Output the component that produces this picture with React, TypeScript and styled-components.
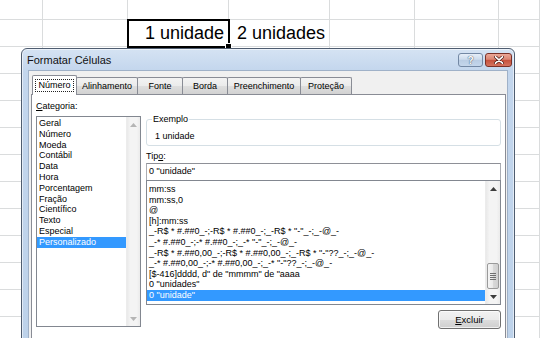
import React from "react";
import styled, { createGlobalStyle, css } from "styled-components";

const GlobalStyle = createGlobalStyle`
  html, body { margin: 0; padding: 0; }
  body {
    width: 540px; height: 338px; overflow: hidden; background: #fff;
    font-family: "Liberation Sans", Arial, sans-serif;
  }
`;

const Page = styled.div`
  position: relative;
  width: 540px;
  height: 338px;
  overflow: hidden;
`;

/* ---------- spreadsheet ---------- */
const Sheet = styled.div`
  display: flex;
  flex-direction: column;
`;
const SheetRow = styled.div<{ $h: number }>`
  display: flex;
  flex: none;
  height: ${(p) => p.$h}px;
`;
const SheetCell = styled.div<{ $w: number; $selected?: boolean }>`
  position: relative;
  box-sizing: border-box;
  flex: none;
  width: ${(p) => p.$w}px;
  height: 100%;
  border-right: 1px solid #dadcdd;
  border-bottom: 1px solid #dadcdd;
  display: flex;
  align-items: flex-end;
  justify-content: flex-end;
  padding: 0 4px 3px 0;
  font-size: 18px;
  line-height: 20px;
  color: #000;
  white-space: nowrap;
  ${(p) =>
    p.$selected &&
    css`
      outline: 2px solid #000;
      outline-offset: -1px;
      z-index: 1;
    `}
`;
const FillHandle = styled.span`
  position: absolute;
  right: -4px;
  bottom: -4px;
  width: 5px;
  height: 5px;
  background: #000;
  border: 1px solid #fff;
`;

/* ---------- dialog frame ---------- */
const Dialog = styled.div`
  position: absolute;
  left: 21px;
  top: 48px;
  width: 494px;
  height: 300px;
  box-sizing: border-box;
  border: 1px solid #4f5d70;
  border-radius: 6px 6px 0 0;
  background: linear-gradient(#d5e3f3, #c3d6ed 22px, #bdd2ea);
  box-shadow: inset 0 0 0 1px rgba(255, 255, 255, 0.55);
  display: flex;
  flex-direction: column;
  font-family: "Liberation Sans", Arial, sans-serif;
  font-size: 9px;
  color: #000;
  z-index: 5;
`;
const TitleBar = styled.div`
  height: 21px;
  flex: none;
  display: flex;
  align-items: flex-start;
  justify-content: space-between;
  padding: 0 2px 0 5px;
`;
const Title = styled.div`
  font-size: 11px;
  line-height: 22px;
  color: #111;
`;
const CaptionButtons = styled.div`
  display: flex;
  gap: 2px;
  margin-top: 4px;
`;
const CaptionButton = styled.div<{ $kind: "help" | "close" }>`
  box-sizing: border-box;
  height: 14px;
  width: ${(p) => (p.$kind === "close" ? 27 : 25)}px;
  border-radius: 3px;
  display: flex;
  align-items: center;
  justify-content: center;
  font-size: 10px;
  font-weight: bold;
  color: #fff;
  ${(p) =>
    p.$kind === "close"
      ? css`
          border: 1px solid #7a3128;
          background: linear-gradient(#eba898, #d98472 45%, #c6503b 50%, #d4735f);
        `
      : css`
          border: 1px solid #7388a4;
          background: linear-gradient(#e6eef8, #ccdbec 45%, #b9cce3 50%, #c4d6eb);
          text-shadow: 0 0 1px #3e4f66, 0 0 1px #3e4f66;
        `}
`;

const Client = styled.div`
  flex: 1;
  margin: 0 6px;
  border: 1px solid #9fb1c8;
  border-bottom: none;
  background: #f0f0f0;
  padding: 4px 1px 0 2px;
  display: flex;
  flex-direction: column;
`;

/* ---------- tabs ---------- */
const TabRow = styled.div`
  display: flex;
  align-items: flex-end;
  height: 19px;
  padding-left: 1px;
  flex: none;
`;
const Tab = styled.div<{ $w: number; $active?: boolean }>`
  box-sizing: border-box;
  width: ${(p) => p.$w}px;
  margin-right: -1px;
  border: 1px solid #898c95;
  border-bottom: none;
  border-radius: 2px 2px 0 0;
  display: flex;
  align-items: center;
  justify-content: center;
  white-space: nowrap;
  ${(p) =>
    p.$active
      ? css`
          position: relative;
          z-index: 2;
          height: 20px;
          margin-bottom: -1px;
          background: #fff;
          padding-bottom: 1px;
        `
      : css`
          height: 17px;
          background: linear-gradient(#f3f3f3, #ebebeb 50%, #dedede 50%, #d2d2d2);
        `}
`;
const FocusText = styled.span`
  border: 1px dotted #222;
  padding: 0 2px;
  line-height: 11px;
`;

const Panel = styled.div`
  flex: 1;
  background: #fff;
  border: 1px solid #898c95;
  border-bottom: none;
  padding: 6px 4px 0 4px;
  display: flex;
  gap: 5px;
`;

const LeftColumn = styled.div`
  width: 105px;
  flex: none;
  display: flex;
  flex-direction: column;
`;
const RightColumn = styled.div`
  flex: 1;
  display: flex;
  flex-direction: column;
`;

const FieldLabel = styled.div<{ $mt?: number; $mb?: number }>`
  line-height: 11px;
  margin-top: ${(p) => p.$mt ?? 0}px;
  margin-bottom: ${(p) => p.$mb ?? 0}px;
  white-space: nowrap;
`;

/* ---------- list boxes ---------- */
const ListBox = styled.div<{ $h: number }>`
  box-sizing: border-box;
  height: ${(p) => p.$h}px;
  flex: none;
  border: 1px solid #828790;
  background: #fff;
  display: flex;
`;
const ListItems = styled.div<{ $pt: number }>`
  flex: 1;
  min-width: 0;
  padding-top: ${(p) => p.$pt}px;
  overflow: hidden;
`;
const ListItem = styled.div<{ $lh: number; $selected?: boolean }>`
  line-height: ${(p) => p.$lh}px;
  height: ${(p) => p.$lh}px;
  padding-left: 2px;
  white-space: nowrap;
  ${(p) =>
    p.$selected &&
    css`
      background: #3399ff;
      color: #fff;
    `}
`;

const ScrollBar = styled.div<{ $w: number }>`
  box-sizing: border-box;
  width: ${(p) => p.$w}px;
  flex: none;
  display: flex;
  flex-direction: column;
  border-left: 1px solid #ececec;
  background: linear-gradient(90deg, #e9e9e9, #f4f4f4 25%, #f4f4f4 75%, #ebebeb);
`;
const ArrowBox = styled.div`
  height: 15px;
  flex: none;
  display: flex;
  align-items: center;
  justify-content: center;
`;
const TrackSpace = styled.div`
  flex: 1;
  display: flex;
  flex-direction: column;
  justify-content: flex-end;
`;
const Thumb = styled.div`
  height: 24px;
  margin: 0 1px;
  border: 1px solid #9a9a9a;
  border-radius: 2px;
  background: linear-gradient(90deg, #f5f5f5, #e9e9e9 50%, #d9d9d9 50%, #d0d0d0);
  display: flex;
  align-items: center;
  justify-content: center;
`;

/* ---------- right column parts ---------- */
const GroupBox = styled.fieldset`
  margin: 13px 0 0 0;
  padding: 0 0 0 8px;
  border: 1px solid #d5dfe5;
  border-radius: 3px;
  min-width: 0;
`;
const Legend = styled.legend`
  padding: 0 1px;
  margin-left: -3px;
  line-height: 11px;
`;
const Sample = styled.div`
  line-height: 11px;
  margin: 6px 0 3px 0;
`;
const TextBox = styled.div`
  box-sizing: border-box;
  height: 17px;
  flex: none;
  margin-top: 1px;
  border: 1px solid #abadb3;
  border-top-color: #8e9097;
  border-bottom: none;
  padding-left: 2px;
  line-height: 15px;
  background: #fff;
  white-space: nowrap;
`;
const ButtonRow = styled.div`
  display: flex;
  justify-content: flex-end;
  margin-top: 5px;
`;
const PushButton = styled.div`
  box-sizing: border-box;
  width: 63px;
  height: 19px;
  border: 1px solid #707070;
  border-radius: 3px;
  background: linear-gradient(#f2f2f2, #ebebeb 50%, #dddddd 50%, #cfcfcf);
  box-shadow: inset 0 0 0 1px rgba(255, 255, 255, 0.7);
  display: flex;
  align-items: center;
  justify-content: center;
  font-size: 9.5px;
`;

/* ---------- icons ---------- */
const Arrow = ({ up, color }: { up?: boolean; color: string }) => (
  <svg width="7" height="4" viewBox="0 0 7 4">
    <polygon points={up ? "0,4 7,4 3.5,0" : "0,0 7,0 3.5,4"} fill={color} />
  </svg>
);
const Grip = () => (
  <svg width="6" height="7" viewBox="0 0 6 7">
    {[0, 2, 4, 6].map((y) => (
      <line key={y} x1="0" y1={y + 0.5} x2="6" y2={y + 0.5} stroke="#6f6f6f" strokeWidth="1" />
    ))}
  </svg>
);
const CloseGlyph = () => (
  <svg width="10" height="8" viewBox="0 0 10 8">
    <path d="M1.5 0.8 L8.5 7.2 M8.5 0.8 L1.5 7.2" stroke="#4d1a14" strokeWidth="3" strokeLinecap="round" />
    <path d="M1.5 0.8 L8.5 7.2 M8.5 0.8 L1.5 7.2" stroke="#fff" strokeWidth="1.6" strokeLinecap="round" />
  </svg>
);

/* ---------- data ---------- */
const COLS = [43, 85, 101, 101, 85, 84, 41];
const ROWS = [20, 27, 27, 27, 27, 27, 27, 27, 27, 27, 27, 27, 27];

const TABS = [
  { label: "Número", w: 45 },
  { label: "Alinhamento", w: 62 },
  { label: "Fonte", w: 46 },
  { label: "Borda", w: 46 },
  { label: "Preenchimento", w: 74 },
  { label: "Proteção", w: 52 },
];

const CATEGORIES = [
  "Geral",
  "Número",
  "Moeda",
  "Contábil",
  "Data",
  "Hora",
  "Porcentagem",
  "Fração",
  "Científico",
  "Texto",
  "Especial",
  "Personalizado",
];

const FORMATS = [
  "mm:ss",
  "mm:ss,0",
  "@",
  "[h]:mm:ss",
  '_-R$ * #.##0_-;-R$ * #.##0_-;_-R$ * "-"_-;_-@_-',
  '_-* #.##0_-;-* #.##0_-;_-* "-"_-;_-@_-',
  '_-R$ * #.##0,00_-;-R$ * #.##0,00_-;_-R$ * "-"??_-;_-@_-',
  '_-* #.##0,00_-;-* #.##0,00_-;_-* "-"??_-;_-@_-',
  '[$-416]dddd, d" de "mmmm" de "aaaa',
  '0 "unidades"',
  '0 "unidade"',
];

export default function App() {
  return (
    <Page>
      <GlobalStyle />
      <Sheet>
        {ROWS.map((h, r) => (
          <SheetRow key={r} $h={h}>
            {COLS.map((w, c) => {
              const selected = r === 1 && c === 2;
              let text = "";
              if (r === 1 && c === 2) text = "1 unidade";
              if (r === 1 && c === 3) text = "2 unidades";
              return (
                <SheetCell key={c} $w={w} $selected={selected}>
                  {text}
                  {selected && <FillHandle />}
                </SheetCell>
              );
            })}
          </SheetRow>
        ))}
      </Sheet>

      <Dialog>
        <TitleBar>
          <Title>Formatar Células</Title>
          <CaptionButtons>
            <CaptionButton $kind="help">?</CaptionButton>
            <CaptionButton $kind="close">
              <CloseGlyph />
            </CaptionButton>
          </CaptionButtons>
        </TitleBar>
        <Client>
          <TabRow>
            {TABS.map((t, i) => (
              <Tab key={t.label} $w={t.w} $active={i === 0}>
                {i === 0 ? <FocusText>{t.label}</FocusText> : t.label}
              </Tab>
            ))}
          </TabRow>
          <Panel>
            <LeftColumn>
              <FieldLabel $mb={4}>
                <u>C</u>ategoria:
              </FieldLabel>
              <ListBox $h={211}>
                <ListItems $pt={1}>
                  {CATEGORIES.map((c, i) => (
                    <ListItem key={c} $lh={10.8} $selected={i === CATEGORIES.length - 1}>
                      {c}
                    </ListItem>
                  ))}
                </ListItems>
                <ScrollBar $w={14}>
                  <ArrowBox>
                    <Arrow up color="#b5b5b5" />
                  </ArrowBox>
                  <TrackSpace />
                  <ArrowBox>
                    <Arrow color="#b5b5b5" />
                  </ArrowBox>
                </ScrollBar>
              </ListBox>
            </LeftColumn>
            <RightColumn>
              <GroupBox>
                <Legend>Exemplo</Legend>
                <Sample>1 unidade</Sample>
              </GroupBox>
              <FieldLabel $mt={5}>
                Tip<u>o</u>:
              </FieldLabel>
              <TextBox>0 "unidade"</TextBox>
              <ListBox $h={125}>
                <ListItems $pt={3}>
                  {FORMATS.map((f, i) => (
                    <ListItem key={f} $lh={10.6} $selected={i === FORMATS.length - 1}>
                      {f}
                    </ListItem>
                  ))}
                </ListItems>
                <ScrollBar $w={15}>
                  <ArrowBox>
                    <Arrow up color="#3c3c3c" />
                  </ArrowBox>
                  <TrackSpace>
                    <Thumb>
                      <Grip />
                    </Thumb>
                  </TrackSpace>
                  <ArrowBox>
                    <Arrow color="#3c3c3c" />
                  </ArrowBox>
                </ScrollBar>
              </ListBox>
              <ButtonRow>
                <PushButton>
                  <u>E</u>xcluir
                </PushButton>
              </ButtonRow>
            </RightColumn>
          </Panel>
        </Client>
      </Dialog>
    </Page>
  );
}
